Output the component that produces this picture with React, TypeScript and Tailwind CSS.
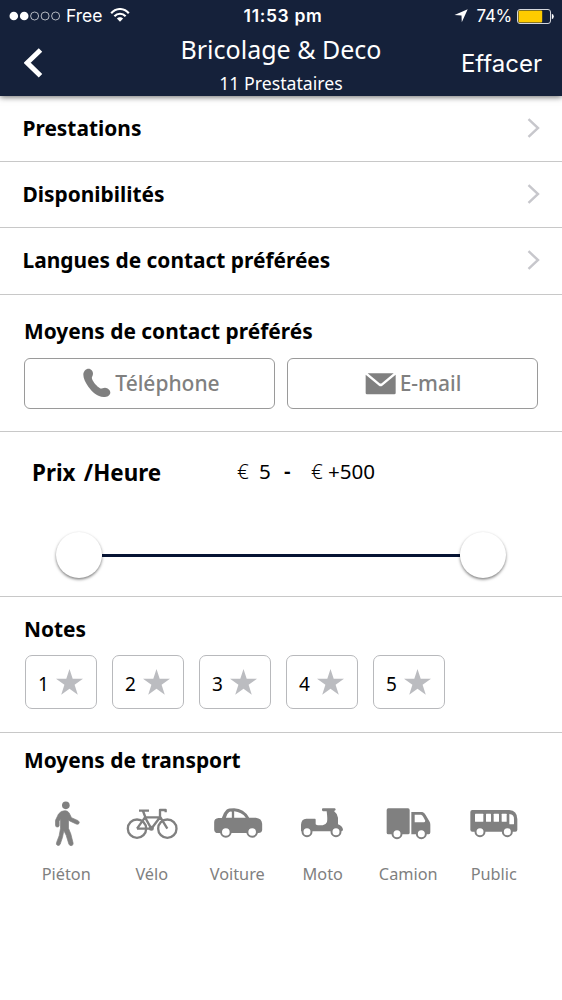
import type { ReactNode } from "react";

const notoSans = "font-['Noto_Sans','Open_Sans',sans-serif]";

function StatusBar() {
  return (
    <div className="flex h-8 items-center font-['Inter',sans-serif] text-white">
      <div className="flex w-[180px] items-center pl-[9px]">
        <svg width="52" height="10" viewBox="0 0 52 10" className="block">
          <circle cx="4.8" cy="5" r="4.3" fill="white" />
          <circle cx="15.2" cy="5" r="4.3" fill="white" />
          <g fill="none" stroke="white" strokeWidth="0.8" opacity="0.85">
            <circle cx="25.6" cy="5" r="4" />
            <circle cx="36.1" cy="5" r="4" />
            <circle cx="46.6" cy="5" r="4" />
          </g>
        </svg>
        <span className="ml-[5px] text-[17.5px] leading-8">Free</span>
        <svg width="20" height="14" viewBox="0 0 20 14" className="mb-[2px] ml-[7px] block">
          <g fill="none" stroke="white" strokeWidth="2.1">
            <path d="M1.2 5.3C6-0.4 14-0.4 18.8 5.3" />
            <path d="M4.4 8.3C7.5 4.8 12.5 4.8 15.6 8.3" />
          </g>
          <path d="M6.9 10.6C8.6 8.8 11.4 8.8 13.1 10.6L10 13.8Z" fill="white" />
        </svg>
      </div>
      <div className="w-[206px] text-center text-[17.5px] leading-8 font-semibold tracking-[0.65px]">11:53 pm</div>
      <div className="flex flex-1 items-center justify-end pr-[8px]">
        <svg width="14" height="14" viewBox="0 0 14 14" className="mr-[9px] block">
          <path d="M13.7 0.3L7.8 13.3L7.5 6.5L0.5 6.1Z" fill="white" />
        </svg>
        <span className="mr-[5px] text-[17px] leading-8 tracking-[-0.3px]">74%</span>
        <svg width="37" height="15" viewBox="0 0 37 15" className="block">
          <rect x="0.5" y="0.5" width="33" height="14" rx="2.5" fill="none" stroke="#d5d8de" />
          <rect x="1.5" y="1.5" width="23.7" height="12" rx="1" fill="#ffcc00" />
          <path d="M34.8 4.8Q36.8 5.5 36.8 7.5T34.8 10.2Z" fill="white" />
        </svg>
      </div>
    </div>
  );
}

function Header() {
  return (
    <header className="relative h-24 bg-[#15213a] text-white shadow-[0_1px_6px_rgba(0,0,0,0.6)]">
      <StatusBar />
      <div className="flex h-16">
        <div className="w-[120px] pt-[15px] pl-6">
          <svg width="20" height="32" viewBox="0 0 20 32" className="block">
            <path d="M16.5 3L3.2 15.8L16.5 28.8" fill="none" stroke="white" strokeWidth="5" />
          </svg>
        </div>
        <div className="flex w-[322px] flex-col items-center">
          <h1 className="h-9 text-[25px] leading-[34px]">Bricolage &amp; Deco</h1>
          <p className="h-7 text-[17.7px] leading-[31px]">11 Prestataires</p>
        </div>
        <div className="w-[120px] pr-5 text-right font-['Inter',sans-serif] text-[24px] leading-[63px]">Effacer</div>
      </div>
    </header>
  );
}

function NavRow({ label, height }: { label: string; height: string }) {
  return (
    <div className={`flex items-center justify-between border-b border-[#c8c8c8] pr-[22px] pl-[22.5px] ${height}`}>
      <span className="text-[20.9px] font-bold">{label}</span>
      <svg width="13" height="20" viewBox="0 0 13 20" className="mb-[2px] block">
        <path d="M1.5 1.2L11 10L1.5 18.8" fill="none" stroke="#c7c7cc" strokeWidth="2.4" />
      </svg>
    </div>
  );
}

function ContactButton({ icon, label }: { icon: ReactNode; label: string }) {
  return (
    <div className="flex h-[51px] w-[251px] items-center justify-center rounded-md border-[1.5px] border-[#9a9a9a] pl-[3px] text-[#808080]">
      {icon}
      <span className="text-[21px] font-medium">{label}</span>
    </div>
  );
}

function PhoneIcon() {
  return (
    <svg width="28" height="30" viewBox="0 0 84 90" className="mr-[4px] mb-[2px] ml-px block" fill="#808080">
      <path d="M1 20C1 10 8 2 17 2C24 2 30 9 30 17C30 24 25 26 27 32C31 43 42 55 50 60C55 64 58 59 66 59C75 60 82 66 82 74C81 82 73 87 62 87C43 86 27 71 16 56C7 43 1 31 1 20Z" />
    </svg>
  );
}

function MailIcon() {
  return (
    <svg width="31" height="22" viewBox="0 0 93 66" className="mr-[4px] -ml-[2px] block" fill="#808080">
      <path d="M8 1H86L51 30Q47 33 43 30Z" />
      <path d="M2 5L42 38Q47 42 52 38L92 5V60Q92 64 88 64H6Q2 64 2 60Z" />
    </svg>
  );
}

function Rating({ value }: { value: number }) {
  return (
    <div className="flex h-[54px] w-[72px] items-center rounded-[7px] border-[1.5px] border-[#b8b9bc] pl-[12px]">
      <span className="w-[18px] pt-[4px] text-[19px] leading-[50px]">{value}</span>
      <svg width="27" height="26" viewBox="0 0 27 26" className="block">
        <path
          d="M13.5 0L16.7 9.7H27L18.6 15.8L21.8 25.8L13.5 19.7L5.2 25.8L8.4 15.8L0 9.7H10.3Z"
          fill="#bbbcc0"
        />
      </svg>
    </div>
  );
}

function Wheel({ cx, cy, r = 14.5 }: { cx: number; cy: number; r?: number }) {
  return <circle cx={cx} cy={cy} r={r} fill="white" stroke="#808080" strokeWidth="6" />;
}

const transports: { label: string; viewBox: string; art: ReactNode }[] = [
  {
    label: "Piéton",
    viewBox: "-49.5 30 256.5 144",
    art: (
      <g>
        <circle cx="76" cy="46" r="11.5" fill="#808080" />
        <path
          d="M73 62Q81 61 86 69L93 83L113 92Q119 96 115 101Q112 104 107 102L86 92L84 90V115L91 132L98 160Q98 167 92 167Q87 167 85 162L77 136L70 122L66 142L59 163Q56 168 51 166Q46 164 48 158L56 137L60 115V88L56 94V107Q55 112 50 111Q45 111 45 106V91L54 72Q61 62 73 62Z"
          fill="#808080"
          stroke="#808080"
          strokeWidth="2"
        />
      </g>
    ),
  },
  {
    label: "Vélo",
    viewBox: "207 30 256.5 144",
    art: (
      <g fill="none" stroke="#808080" strokeWidth="7" strokeLinejoin="round">
        <circle cx="291" cy="116" r="27.5" />
        <circle cx="382" cy="116" r="27.5" />
        <path d="M291 116L315 82H360L334 116H291M315 82L334 116M309 63L317 84M297 62H327M382 116L360 80V60H377V67" />
        <circle cx="334" cy="115" r="4" fill="#808080" />
      </g>
    ),
  },
  {
    label: "Voiture",
    viewBox: "-16.5 30 256.5 144",
    art: (
      <g>
        <path
          d="M41 97Q41 85 54 84H64Q69 67 78 59Q84 55 101 55Q130 56 146 83H166Q184 85 185 101V120Q184 129 174 129H52Q42 129 41 119Z"
          fill="#808080"
        />
        <path d="M76 83Q79 71 86 66Q89 64 94 65V83ZM101 64Q123 66 136 83H101Z" fill="white" />
        <Wheel cx={76} cy={126} />
        <Wheel cx={155} cy={126} />
      </g>
    ),
  },
  {
    label: "Moto",
    viewBox: "240 30 256.5 144",
    art: (
      <g>
        <path
          d="M366 57Q366 55 369 55H404Q407 56 407 59Q406 62 402 63Q413 72 414 83V103Q428 109 429 119Q428 124 423 124H303V104Q304 86 319 86H345Q347 86 347 89V103Q350 106 354 106H368Q378 104 381 96Q383 87 380 64H369Q366 62 366 60Z"
          fill="#808080"
        />
        <Wheel cx={321} cy={125} r={13.5} />
        <Wheel cx={408} cy={125} r={13.5} />
      </g>
    ),
  },
  {
    label: "Camion",
    viewBox: "-12 30 256.5 144",
    art: (
      <g fill="#808080">
        <rect x="50" y="55" width="69" height="78" rx="5" />
        <path d="M124 66H157Q163 67 167 75L178 94Q181 98 181 104V127Q181 133 176 133H124Z" />
        <path d="M134 74H153Q157 75 160 81L165 91Q167 97 162 97H134Z" fill="white" />
        <Wheel cx={81} cy={131} r={13.5} />
        <Wheel cx={154} cy={131} r={13.5} />
      </g>
    ),
  },
  {
    label: "Public",
    viewBox: "243 30 256.5 144",
    art: (
      <g>
        <path d="M301 66Q301 60 307 60H418Q441 61 442 87V119Q442 125 436 125H307Q301 125 301 119Z" fill="#808080" />
        <g fill="white">
          <rect x="315" y="71" width="25" height="24" rx="1.5" />
          <rect x="348" y="71" width="15" height="24" rx="1.5" />
          <rect x="371" y="71" width="16" height="24" rx="1.5" />
          <rect x="395" y="71" width="15" height="24" rx="1.5" />
          <path d="M418 72Q433 73 432 89V101Q432 103 430 103H420Q418 103 418 101Z" />
        </g>
        <Wheel cx={330} cy={125} r={13.5} />
        <Wheel cx={412} cy={125} r={13.5} />
      </g>
    ),
  },
];

function Thumb() {
  return <div className="h-[46px] w-[46px] rounded-full bg-white shadow-[0_1.5px_3px_rgba(0,0,0,0.5)]" />;
}

export default function App() {
  return (
    <div className={`h-[1000px] w-[562px] overflow-hidden bg-white text-black ${notoSans}`}>
      <Header />

      <NavRow label="Prestations" height="h-[66px]" />
      <NavRow label="Disponibilités" height="h-[66px]" />
      <NavRow label="Langues de contact préférées" height="h-[67px]" />

      <section className="h-[137px] border-b border-[#c8c8c8] px-6 pt-[18px]">
        <h2 className="h-[45px] text-[20.9px] leading-[37px] font-bold">Moyens de contact préférés</h2>
        <div className="flex justify-between">
          <ContactButton icon={<PhoneIcon />} label="Téléphone" />
          <ContactButton icon={<MailIcon />} label="E-mail" />
        </div>
      </section>

      <section className="h-[165px] border-b border-[#c8c8c8]">
        <div className="flex h-[81px] pt-[22px] pl-8">
          <h2 className="w-[205px] text-[22.4px] leading-[37px] font-bold [word-spacing:2.5px]">Prix /Heure</h2>
          <div className="flex text-[20.6px] leading-[35px]">
            <span className="w-[22px] font-light">€</span>
            <span className="w-[25px]">5</span>
            <span className="w-[27px] font-semibold">-</span>
            <span className="w-[17px] font-light">€</span>
            <span>+500</span>
          </div>
        </div>
        <div className="flex items-center pt-[19px] pl-[56px]">
          <Thumb />
          <div className="h-[3px] w-[358px] bg-[#061333]" />
          <Thumb />
        </div>
      </section>

      <section className="h-[136px] border-b border-[#c8c8c8] pt-[14px] pl-6">
        <h2 className="h-[44px] text-[20.9px] leading-[36px] font-bold">Notes</h2>
        <div className="flex gap-[15px] pl-[1px]">
          {[1, 2, 3, 4, 5].map((n) => (
            <Rating key={n} value={n} />
          ))}
        </div>
      </section>

      <section className="pt-[9px]">
        <h2 className="h-[58px] pl-6 text-[20.9px] leading-[36px] font-bold">Moyens de transport</h2>
        <div className="grid w-[536.5px] grid-cols-6 pl-[23.5px]">
          {transports.map((t) => (
            <div key={t.label} className="flex flex-col items-center">
              <svg width="85.5" height="48" viewBox={t.viewBox} className="block">
                {t.art}
              </svg>
              <span className="mt-[11px] text-[16.3px] leading-[30px] text-[#808080]">{t.label}</span>
            </div>
          ))}
        </div>
      </section>
    </div>
  );
}
